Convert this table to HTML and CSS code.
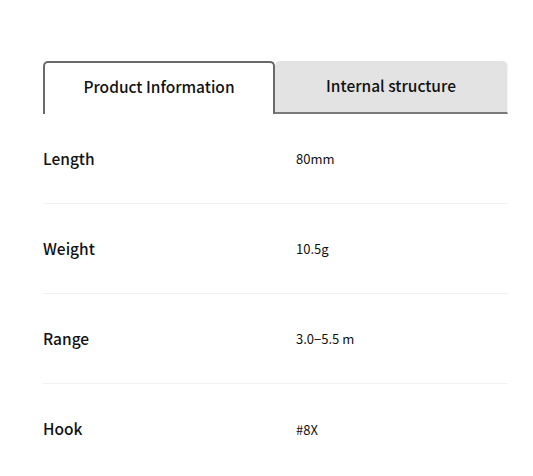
FILE: index.html
```html
<!DOCTYPE html>
<html lang="en">
<head>
<meta charset="utf-8">
<title>Product</title>
<link rel="stylesheet" href="styles.css">
</head>
<body>
<div class="wrap">
  <div class="tabs">
    <div class="tab tab-active">Product Information</div>
    <div class="tab tab-inactive">Internal structure</div>
  </div>
  <div class="specs">
    <div class="row"><div class="label">Length</div><div class="value">80mm</div></div>
    <div class="row"><div class="label">Weight</div><div class="value">10.5g</div></div>
    <div class="row"><div class="label">Range</div><div class="value">3.0−5.5 m</div></div>
    <div class="row"><div class="label">Hook</div><div class="value">#8X</div></div>
  </div>
</div>
</body>
</html>
```
FILE: styles.css
```css
html, body {
  margin: 0;
  padding: 0;
  background: #ffffff;
}
body {
  font-family: "Noto Sans CJK JP", "Noto Sans", sans-serif;
  color: #111;
}
.wrap {
  margin-left: 43px;
  width: 465px;
  padding-top: 61px;
}
.tabs {
  display: flex;
  height: 53px;
}
.tab {
  box-sizing: border-box;
  flex: 0 0 auto;
  height: 53px;
  display: flex;
  align-items: center;
  justify-content: center;
  font-size: 15.5px;
  font-weight: 500;
  line-height: 1;
  border-radius: 5px 5px 0 0;
}
.tab-active {
  width: 232px;
  border: 2px solid #6a6a6a;
  border-bottom: none;
  background: #fff;
  padding-bottom: 4px;
}
.tab-inactive {
  width: 233px;
  background: #e3e3e3;
  border-bottom: 2px solid #7a7a7a;
  border-right: 1px solid #f2f2f2;
  padding-bottom: 2px;
}
.row {
  display: flex;
  align-items: center;
  height: 90px;
  box-sizing: border-box;
  border-bottom: 1px solid #f2f2f2;
}
.row:last-child {
  border-bottom: none;
}
.label {
  width: 253px;
  font-size: 15.5px;
  font-weight: 500;
  line-height: 1;
}
.value {
  font-size: 13px;
  line-height: 1;
}
```
